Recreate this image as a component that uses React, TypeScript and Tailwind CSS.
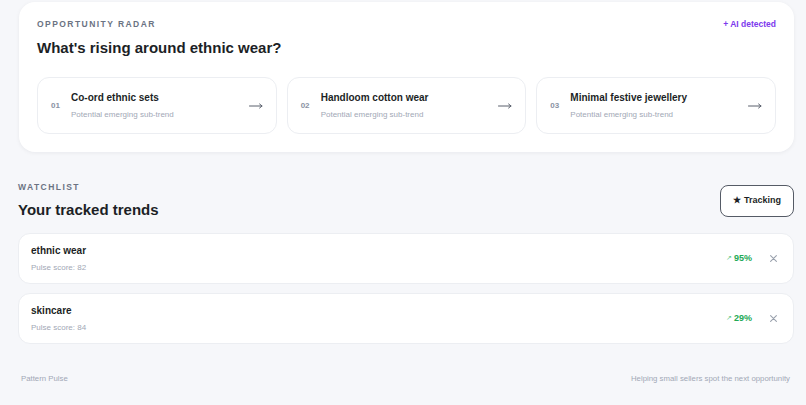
const SUB_TRENDS = [
  { n: "01", title: "Co-ord ethnic sets" },
  { n: "02", title: "Handloom cotton wear" },
  { n: "03", title: "Minimal festive jewellery" },
]

const TRACKED = [
  { name: "ethnic wear", score: 82, change: "95%" },
  { name: "skincare", score: 84, change: "29%" },
]

function LongArrow() {
  return (
    <svg width="14" height="8" viewBox="0 0 14 8" fill="none" stroke="#5a606d" strokeWidth="1" strokeLinecap="round">
      <path d="M0.5 4H13M10.6 2L13 4L10.6 6" />
    </svg>
  )
}

export default function App() {
  return (
    <div
      className="min-h-[405px] bg-[#f6f7fa] text-[#1c1f26] pl-[18px] pr-[12px] pt-[2px]"
      style={{ fontFamily: '"Liberation Sans", Arial, sans-serif' }}
    >
      {/* Opportunity radar */}
      <section className="ml-px rounded-2xl bg-white px-[18px] pt-[17px] pb-[18px] shadow-[0_1px_4px_rgba(15,23,42,0.06)]">
        <div className="flex items-center justify-between leading-[11px]">
          <div className="text-[8.5px] font-bold tracking-[0.17em] text-[#6b7383]">OPPORTUNITY RADAR</div>
          <div className="text-[8.5px] font-bold text-[#7c3aed]">+ AI detected</div>
        </div>
        <h1 className="mt-[8px] text-[15px] font-bold leading-[20px]">What's rising around ethnic wear?</h1>
        <div className="mt-[19px] grid grid-cols-3 gap-[10px]">
          {SUB_TRENDS.map((t) => (
            <div
              key={t.n}
              className="flex h-[57px] items-center rounded-xl border border-[#eceef2] bg-white pl-[13px] pr-[13px]"
            >
              <span className="w-[20px] text-[8px] font-bold text-[#8a92a3]">{t.n}</span>
              <div className="flex-1">
                <div className="text-[10px] font-bold leading-[14px]">{t.title}</div>
                <div className="mt-[5px] text-[8px] leading-[10px] text-[#a2a8b6]">Potential emerging sub-trend</div>
              </div>
              <LongArrow />
            </div>
          ))}
        </div>
      </section>

      {/* Watchlist */}
      <section className="mt-[30px]">
        <div className="flex items-center justify-between">
          <div>
            <div className="text-[8.5px] font-bold leading-[11px] tracking-[0.17em] text-[#6b7383]">WATCHLIST</div>
            <h2 className="mt-[7px] text-[15px] font-bold leading-[20px]">Your tracked trends</h2>
          </div>
          <button className="h-[32px] rounded-lg border border-[#555b66] bg-white px-[12px] text-[9px] font-bold">
            ★ Tracking
          </button>
        </div>

        <div className="mt-[13px] flex flex-col gap-[9px]">
          {TRACKED.map((t) => (
            <div
              key={t.name}
              className="flex h-[51px] items-center rounded-xl border border-[#eceef2] bg-white pl-[12px] pr-[16px]"
            >
              <div className="flex-1">
                <div className="text-[10px] font-bold leading-[14px]">{t.name}</div>
                <div className="mt-[5px] text-[8px] leading-[10px] text-[#a2a8b6]">Pulse score: {t.score}</div>
              </div>
              <span className="flex items-center gap-[2px] text-[9px] font-bold text-[#22a955]">
                <span className="text-[7px] font-normal text-[#5fc98a]">↗</span>
                {t.change}
              </span>
              <svg className="ml-[18px]" width="7" height="7" viewBox="0 0 7 7" stroke="#9aa1ad" strokeWidth="1.1" strokeLinecap="round">
                <path d="M0.6 0.6L6.4 6.4M6.4 0.6L0.6 6.4" />
              </svg>
            </div>
          ))}
        </div>
      </section>

      <footer className="mt-[29px] flex justify-between pl-[3px] pr-[4px] text-[7.8px] leading-[11px] text-[#a2a8b6]">
        <span>Pattern Pulse</span>
        <span>Helping small sellers spot the next opportunity</span>
      </footer>
    </div>
  )
}
